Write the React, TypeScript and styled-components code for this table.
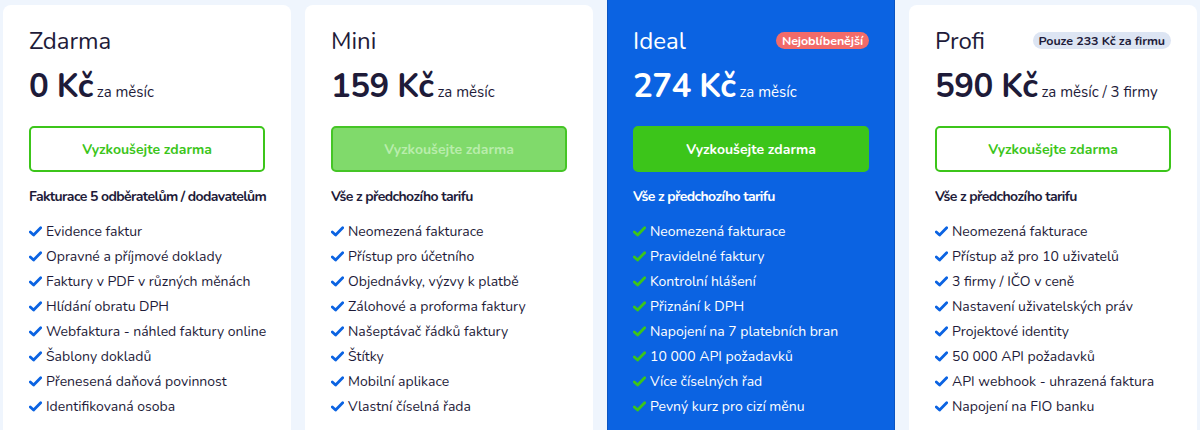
import React from "react";
import styled, { createGlobalStyle, css } from "styled-components";

const Global = createGlobalStyle`
  html, body { margin: 0; padding: 0; }
  body {
    background: #eff5fd;
    font-family: "Nunito", "Lato", "Open Sans", sans-serif;
    color: #1e1b39;
    overflow: hidden;
    width: 1200px;
    height: 430px;
  }
`;

type Variant = "light" | "featured";

const Grid = styled.div`
  display: grid;
  grid-template-columns: repeat(4, 288px);
  column-gap: 14px;
  padding: 5px 0 0 3px;
  height: 430px;
  box-sizing: border-box;
  align-items: stretch;
`;

const Card = styled.div<{ $v: Variant }>`
  display: flex;
  flex-direction: column;
  border-radius: 8px 8px 0 0;
  background: #ffffff;
  padding: 20px 26px 0;
  box-sizing: border-box;
  overflow: hidden;
  ${(p) =>
    p.$v === "featured" &&
    css`
      background: #0b63e2;
      color: #ffffff;
      margin-top: -5px;
      padding-top: 25px;
      border-radius: 0;
      box-shadow: inset 1px 0 0 #0a54c2, inset -1px 0 0 #0a54c2;
    `}
`;

const TitleRow = styled.div`
  display: flex;
  align-items: center;
  justify-content: space-between;
  height: 32px;
`;

const Title = styled.h2`
  margin: 0;
  font-size: 24px;
  font-weight: 400;
  line-height: 32px;
`;

const Badge = styled.span<{ $tone: "red" | "gray" }>`
  font-size: 12.5px;
  font-weight: 700;
  line-height: 17px;
  padding: 0 6px;
  border-radius: 9px;
  margin-top: -2px;
  letter-spacing: -0.1px;
  ${(p) =>
    p.$tone === "red"
      ? css`
          background: #f26b69;
          color: #ffffff;
        `
      : css`
          background: #dde5f3;
          color: #1e1b39;
        `}
`;

const PriceRow = styled.div`
  display: flex;
  align-items: baseline;
  margin-top: 10px;
  height: 40px;
`;

const Price = styled.span`
  font-size: 33px;
  font-weight: 700;
  line-height: 40px;
  letter-spacing: -0.5px;
`;

const Period = styled.span`
  font-size: 15px;
  margin-left: 4px;
`;

const Button = styled.button<{ $kind: "outline" | "muted" | "solid" }>`
  margin-top: 19px;
  height: 46px;
  width: 100%;
  flex: none;
  border-radius: 5px;
  font-family: inherit;
  font-size: 14px;
  font-weight: 700;
  cursor: pointer;
  box-sizing: border-box;
  ${(p) =>
    p.$kind === "outline"
      ? css`
          background: #ffffff;
          border: 2px solid #3cc51a;
          color: #3cc51a;
        `
      : p.$kind === "muted"
      ? css`
          background: #80da6b;
          border: 2px solid #45c526;
          color: #b9edac;
        `
      : css`
          background: #3cc51a;
          border: 2px solid #3cc51a;
          color: #ffffff;
        `}
`;

const Heading = styled.div`
  margin-top: 15px;
  font-size: 14px;
  font-weight: 700;
  line-height: 20px;
  white-space: nowrap;
  letter-spacing: -0.6px;
`;

const List = styled.ul`
  list-style: none;
  margin: 12px 0 0;
  padding: 0;
`;

const Item = styled.li`
  display: flex;
  align-items: center;
  gap: 4px;
  font-size: 14px;
  line-height: 25px;
  white-space: nowrap;
`;

const Check = ({ color }: { color: string }) => (
  <svg width="13" height="11" viewBox="0 0 13 11" style={{ flex: "none" }}>
    <path
      d="M1.3 5.9 L4.6 9 L11.7 1.7"
      fill="none"
      stroke={color}
      strokeWidth="2.8"
      strokeLinecap="round"
      strokeLinejoin="round"
    />
  </svg>
);

type Plan = {
  name: string;
  price: string;
  period: string;
  badge?: { text: string; tone: "red" | "gray" };
  button: "outline" | "muted" | "solid";
  heading: string;
  features: string[];
  v: Variant;
};

const plans: Plan[] = [
  {
    name: "Zdarma",
    price: "0 Kč",
    period: "za měsíc",
    button: "outline",
    heading: "Fakturace 5 odběratelům / dodavatelům",
    v: "light",
    features: [
      "Evidence faktur",
      "Opravné a příjmové doklady",
      "Faktury v PDF v různých měnách",
      "Hlídání obratu DPH",
      "Webfaktura - náhled faktury online",
      "Šablony dokladů",
      "Přenesená daňová povinnost",
      "Identifikovaná osoba",
    ],
  },
  {
    name: "Mini",
    price: "159 Kč",
    period: "za měsíc",
    button: "muted",
    heading: "Vše z předchozího tarifu",
    v: "light",
    features: [
      "Neomezená fakturace",
      "Přístup pro účetního",
      "Objednávky, výzvy k platbě",
      "Zálohové a proforma faktury",
      "Našeptávač řádků faktury",
      "Štítky",
      "Mobilní aplikace",
      "Vlastní číselná řada",
    ],
  },
  {
    name: "Ideal",
    price: "274 Kč",
    period: "za měsíc",
    badge: { text: "Nejoblíbenější", tone: "red" },
    button: "solid",
    heading: "Vše z předchozího tarifu",
    v: "featured",
    features: [
      "Neomezená fakturace",
      "Pravidelné faktury",
      "Kontrolní hlášení",
      "Přiznání k DPH",
      "Napojení na 7 platebních bran",
      "10 000 API požadavků",
      "Více číselných řad",
      "Pevný kurz pro cizí měnu",
    ],
  },
  {
    name: "Profi",
    price: "590 Kč",
    period: "za měsíc / 3 firmy",
    badge: { text: "Pouze 233 Kč za firmu", tone: "gray" },
    button: "outline",
    heading: "Vše z předchozího tarifu",
    v: "light",
    features: [
      "Neomezená fakturace",
      "Přístup až pro 10 uživatelů",
      "3 firmy / IČO v ceně",
      "Nastavení uživatelských práv",
      "Projektové identity",
      "50 000 API požadavků",
      "API webhook - uhrazená faktura",
      "Napojení na FIO banku",
    ],
  },
];

export default function App() {
  return (
    <>
      <Global />
      <Grid>
        {plans.map((p) => (
          <Card key={p.name} $v={p.v}>
            <TitleRow>
              <Title>{p.name}</Title>
              {p.badge && <Badge $tone={p.badge.tone}>{p.badge.text}</Badge>}
            </TitleRow>
            <PriceRow>
              <Price>{p.price}</Price>
              <Period>{p.period}</Period>
            </PriceRow>
            <Button $kind={p.button}>Vyzkoušejte zdarma</Button>
            <Heading>{p.heading}</Heading>
            <List>
              {p.features.map((f) => (
                <Item key={f}>
                  <Check color={p.v === "featured" ? "#3cc51a" : "#0b63e2"} />
                  {f}
                </Item>
              ))}
            </List>
          </Card>
        ))}
      </Grid>
    </>
  );
}
